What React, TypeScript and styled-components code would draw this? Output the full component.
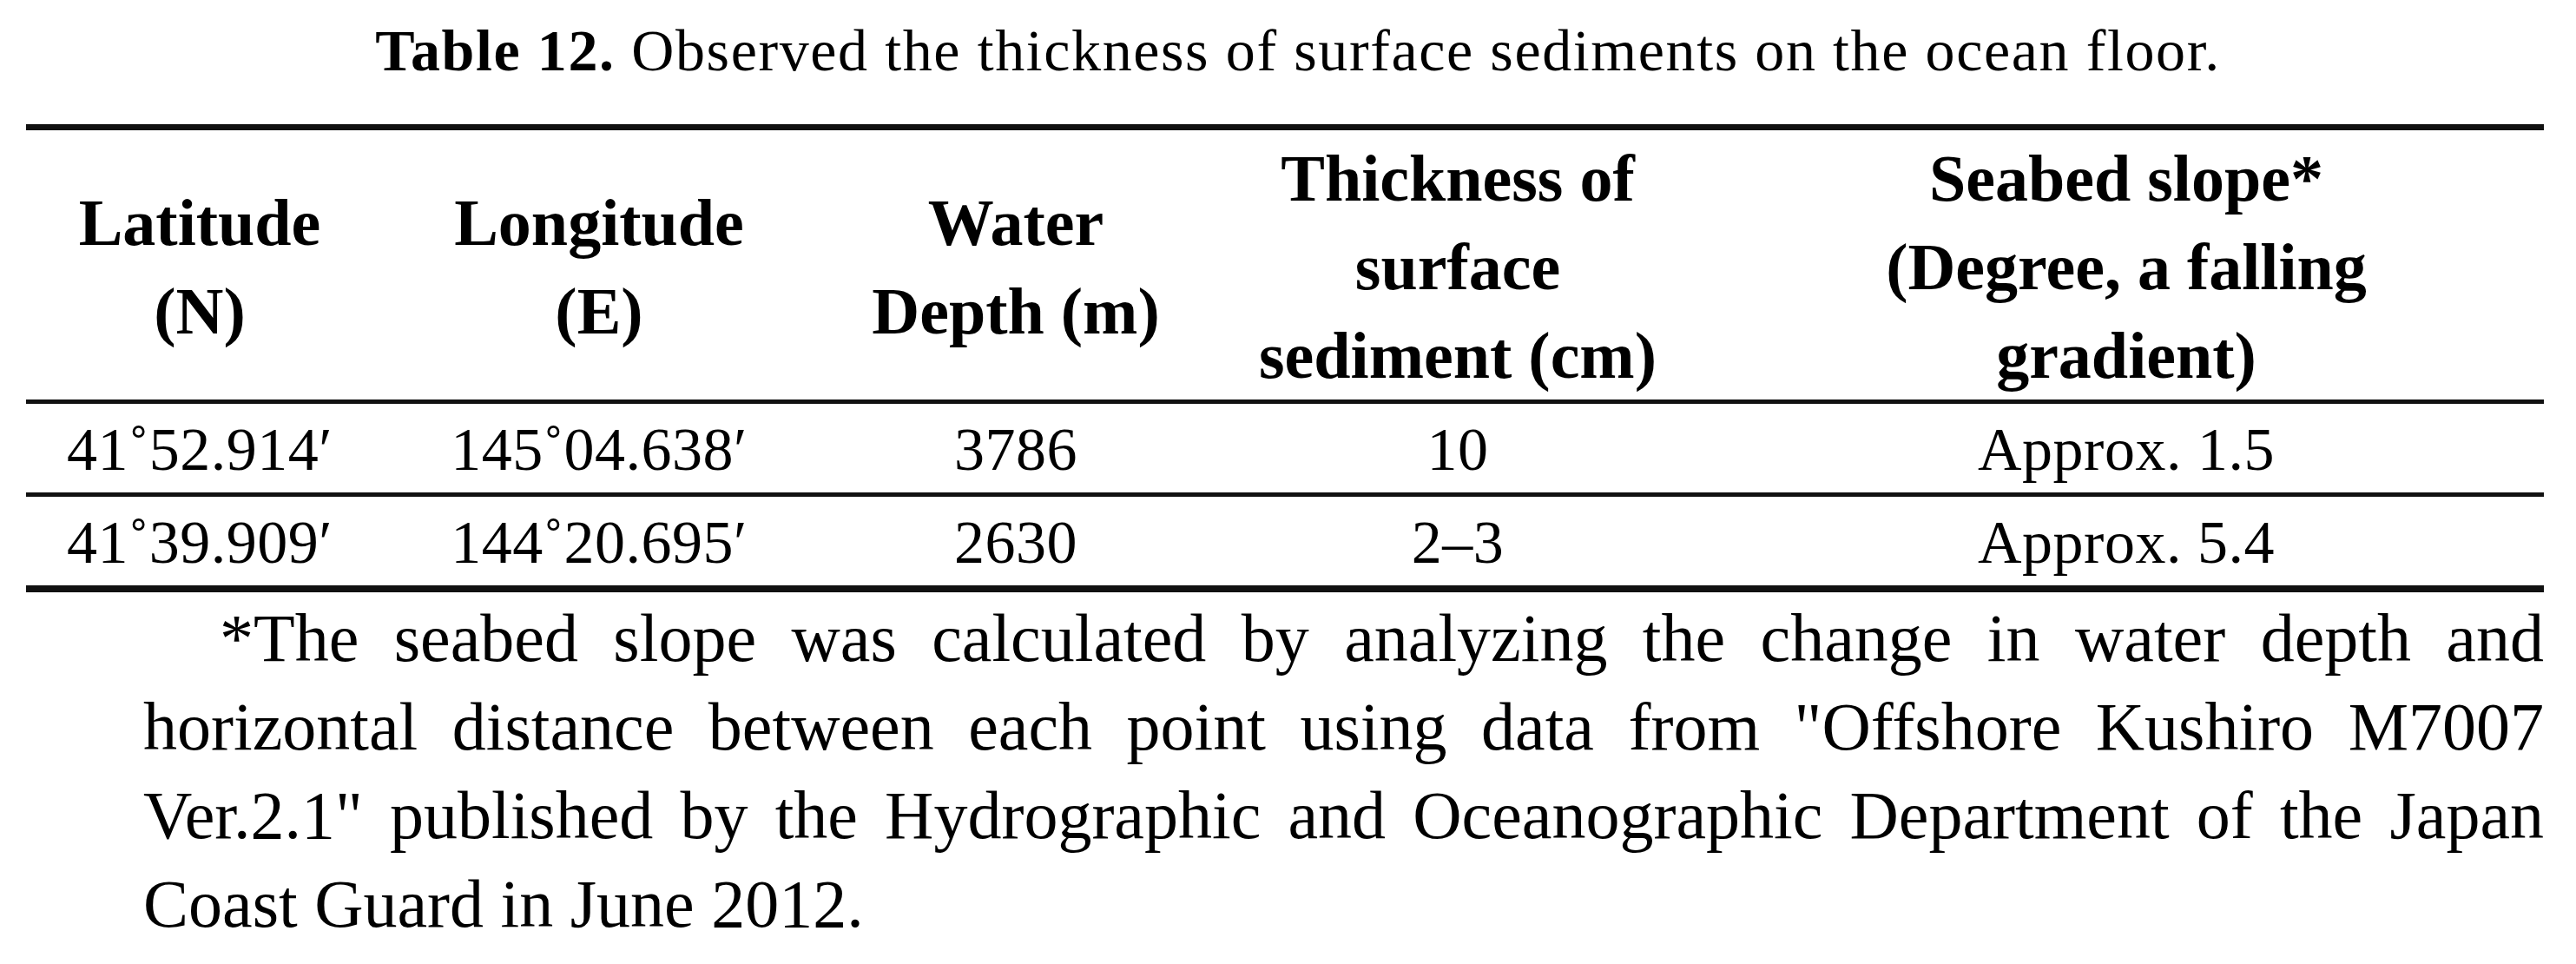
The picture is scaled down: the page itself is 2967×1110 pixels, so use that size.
import React from 'react';
import styled, { createGlobalStyle } from 'styled-components';

// page reset + serif face close to the Palatino of the source
const GlobalStyle = createGlobalStyle`
  html, body {
    margin: 0;
    padding: 0;
    background: #fff;
  }
  body {
    font-family: "Liberation Serif", "Times New Roman", serif;
    color: #000;
  }
`;

const Page = styled.div`
  width: 2967px;
  padding: 18px 37px 0 30px;
  box-sizing: border-box;
`;

const Caption = styled.p`
  margin: 0 0 45px;
  padding-left: 30px;
  text-align: center;
  font-size: 68px;
  line-height: 80px;
  letter-spacing: 1.6px;

  b {
    font-weight: 700;
  }
`;

const Table = styled.table`
  width: 2900px;
  table-layout: fixed;
  border-collapse: collapse;
  border-top: 7px solid #111;
  border-bottom: 8px solid #111;
`;

const Col = styled.col<{ $w?: number }>`
  width: ${p => (p.$w ? `${p.$w}px` : 'auto')};
`;

const HeadCell = styled.th`
  padding: 4px 0 0;
  font-size: 76px;
  font-weight: 700;
  line-height: 102px;
  text-align: center;
  vertical-align: middle;
  white-space: nowrap;
  border-bottom: 5px solid #111;
`;

const Row = styled.tr`
  &:last-child td {
    border-bottom: none;
  }
`;

const Cell = styled.td`
  padding: 4px 0 0;
  font-size: 70px;
  line-height: 98px;
  letter-spacing: 0.5px;
  text-align: center;
  white-space: nowrap;
  border-bottom: 5px solid #111;
`;

const Note = styled.div`
  margin: 2px 0 0 135px;
  font-size: 78px;
  line-height: 102px;
`;

const NoteLine = styled.div<{ $last?: boolean; $indent?: boolean }>`
  padding-left: ${p => (p.$indent ? '88px' : '0')};
  text-align: ${p => (p.$last ? 'left' : 'justify')};
  text-align-last: ${p => (p.$last ? 'left' : 'justify')};
`;

const columns = [400, 520, 440, 578, 0];

const rows = [
  ['41˚52.914′', '145˚04.638′', '3786', '10', 'Approx. 1.5'],
  ['41˚39.909′', '144˚20.695′', '2630', '2–3', 'Approx. 5.4'],
];

const noteLines = [
  '*The seabed slope was calculated by analyzing the change in water depth and',
  'horizontal distance between each point using data from "Offshore Kushiro M7007',
  'Ver.2.1" published by the Hydrographic and Oceanographic Department of the Japan',
  'Coast Guard in June 2012.',
];

function App() {
  return (
    <Page>
      <GlobalStyle />
      <Caption>
        <b>Table 12.</b> Observed the thickness of surface sediments on the ocean floor.
      </Caption>

      <Table>
        <colgroup>
          {columns.map((w, i) => (
            <Col key={i} $w={w || undefined} />
          ))}
        </colgroup>
        <thead>
          <tr>
            <HeadCell>Latitude<br />(N)</HeadCell>
            <HeadCell>Longitude<br />(E)</HeadCell>
            <HeadCell>Water<br />Depth (m)</HeadCell>
            <HeadCell>Thickness of<br />surface<br />sediment (cm)</HeadCell>
            <HeadCell>Seabed slope*<br />(Degree, a falling<br />gradient)</HeadCell>
          </tr>
        </thead>
        <tbody>
          {rows.map((r, i) => (
            <Row key={i}>
              {r.map((v, j) => (
                <Cell key={j}>{v}</Cell>
              ))}
            </Row>
          ))}
        </tbody>
      </Table>

      <Note>
        {noteLines.map((line, i) => (
          <NoteLine key={i} $indent={i === 0} $last={i === noteLines.length - 1}>
            {line}
          </NoteLine>
        ))}
      </Note>
    </Page>
  );
}

export default App;
